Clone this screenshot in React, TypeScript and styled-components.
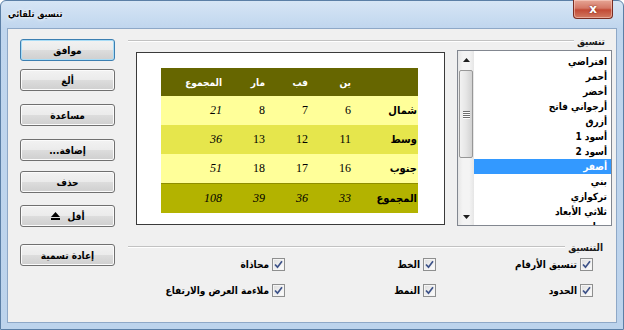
import React from 'react';
import styled, { createGlobalStyle } from 'styled-components';

const Global = createGlobalStyle`
  html, body { margin: 0; padding: 0; background: #ffffff; }
  body { width: 624px; height: 330px; overflow: hidden; font-family: "DejaVu Sans Condensed", "DejaVu Sans", sans-serif; }
  * { box-sizing: border-box; }
`;

const Frame = styled.div`
  width: 624px;
  height: 330px;
  display: flex;
  flex-direction: column;
  border: 1px solid #5b7fa6;
  border-radius: 6px 6px 0 0;
  background: linear-gradient(#d6e5f5 0px, #c0d6ee 27px, #bcd3ec 100%);
  padding: 0 6px 6px;
`;

const TitleBar = styled.div`
  height: 27px;
  display: flex;
  justify-content: space-between;
  align-items: flex-start;
`;

const Title = styled.div`
  margin-top: 8px;
  margin-left: 1px;
  font-size: 9px;
  font-weight: bold;
  color: #000;
  text-shadow: 0 0 4px #ffffff, 0 0 2px #ffffff;
`;

const CloseButton = styled.div`
  width: 40px;
  height: 19px;
  margin-right: 4px;
  margin-top: -1px;
  border: 1px solid #7a2d22;
  border-top: none;
  border-radius: 0 0 4px 4px;
  background: linear-gradient(#e6a595 0%, #d47866 45%, #c24a35 55%, #d27a62 100%);
  box-shadow: inset 0 0 0 1px rgba(255, 220, 210, 0.5);
  display: flex;
  align-items: center;
  justify-content: center;
  color: #fff;
  font-family: "DejaVu Sans", sans-serif;
  font-weight: bold;
  font-size: 12px;
  text-shadow: 0 0 2px #6a1a10;
`;

const Client = styled.div`
  flex: 1;
  border: 1px solid #8ea8c7;
  background: #f0f0f0;
  display: flex;
  direction: rtl;
  justify-content: space-between;
`;

const MainColumn = styled.div`
  width: 484px;
  margin-right: 4px;
  padding-top: 5px;
  display: flex;
  flex-direction: column;
`;

const GroupHeader = styled.div<{ $top: number }>`
  height: 14px;
  margin-top: ${(p) => p.$top}px;
  display: flex;
  align-items: center;
  gap: 3px;
`;

const GroupLabel = styled.span<{ $inset: number }>`
  margin-right: ${(p) => p.$inset}px;
  font-size: 10px;
  font-weight: bold;
  color: #1a1a1a;
  white-space: nowrap;
`;

const GroupLine = styled.div`
  flex: 1;
  height: 2px;
  border-top: 1px solid #c2c2c2;
  border-bottom: 1px solid #ffffff;
`;

const FormatRow = styled.div`
  display: flex;
  gap: 12px;
  margin-top: 2px;
`;

const ListBox = styled.div`
  width: 155px;
  height: 176px;
  border: 1px solid #828790;
  background: #ffffff;
  display: flex;
`;

const ListItems = styled.div`
  flex: 1;
  overflow: hidden;
  padding-top: 3px;
`;

const ListItem = styled.div<{ $selected?: boolean }>`
  height: 15px;
  line-height: 15px;
  padding-right: 4px;
  font-size: 10px;
  font-weight: bold;
  white-space: nowrap;
  color: ${(p) => (p.$selected ? '#ffffff' : '#000000')};
  background: ${(p) => (p.$selected ? '#3399ff' : 'transparent')};
`;

const ScrollBar = styled.div`
  width: 16px;
  display: flex;
  flex-direction: column;
  background: linear-gradient(90deg, #e6e6e6, #f4f4f4 30%, #f4f4f4 70%, #e6e6e6);
  direction: ltr;
`;

const ScrollArrow = styled.div`
  height: 17px;
  display: flex;
  align-items: center;
  justify-content: center;
`;

const ScrollTrack = styled.div`
  flex: 1;
  padding-top: 2px;
`;

const Thumb = styled.div`
  margin: 0 1px;
  height: 88px;
  border: 1px solid #979797;
  border-radius: 2px;
  background: linear-gradient(90deg, #f2f2f2, #e6e6e6 50%, #d2d2d2);
  display: flex;
  flex-direction: column;
  align-items: center;
  justify-content: center;
  gap: 1px;
`;

const Grip = styled.div`
  width: 7px;
  height: 1px;
  background: #6f6f6f;
  box-shadow: 0 1px 0 #ffffff;
`;

const Preview = styled.div`
  width: 309px;
  height: 173px;
  margin-top: 2px;
  border: 1px solid #3a3a3a;
  background: #ffffff;
  padding: 15px 26px 0 0;
`;

const Table = styled.table`
  border-collapse: collapse;
  table-layout: fixed;
  width: 257px;
  direction: rtl;
`;

const Row = styled.tr<{ $bg: string; $h: number; $line?: boolean }>`
  background: ${(p) => p.$bg};
  height: ${(p) => p.$h}px;
  border-top: ${(p) => (p.$line ? '1px solid #8f8e00' : 'none')};
`;

const HeadCell = styled.td<{ $w: number }>`
  width: ${(p) => p.$w}px;
  padding: 0 12px 0 0;
  text-align: right;
  color: #ffffff;
  font-size: 10px;
  font-weight: bold;
`;

const LabelCell = styled.td`
  padding: 0 1px 0 0;
  text-align: right;
  color: #000;
  font-size: 11px;
  font-weight: bold;
  white-space: nowrap;
`;

const NumCell = styled.td<{ $italic?: boolean }>`
  padding: 0 12px 0 0;
  text-align: right;
  color: #000;
  font-family: "Liberation Serif", serif;
  font-size: 12px;
  font-style: ${(p) => (p.$italic ? 'italic' : 'normal')};
`;

const CheckGrid = styled.div`
  margin-top: 4px;
  padding-right: 19px;
  display: grid;
  grid-template-columns: 157px 151px auto;
  row-gap: 13px;
`;

const CheckItem = styled.label`
  display: flex;
  align-items: center;
  gap: 3px;
  height: 13px;
  font-size: 10px;
  font-weight: bold;
  color: #000;
  white-space: nowrap;
`;

const CheckBox = styled.span`
  width: 13px;
  height: 13px;
  flex: none;
  border: 1px solid #8e8f8f;
  background: linear-gradient(135deg, #dcdcdc, #ffffff);
  box-shadow: inset 0 0 0 1px #f4f4f4;
  display: flex;
  align-items: center;
  justify-content: center;
`;

const ButtonColumn = styled.div`
  width: 95px;
  margin-left: 12px;
  display: flex;
  flex-direction: column;
`;

const Button = styled.div<{ $gap: number; $default?: boolean }>`
  height: 22px;
  margin-top: ${(p) => p.$gap}px;
  border: 1px solid ${(p) => (p.$default ? '#3c7fb1' : '#707070')};
  border-radius: 3px;
  background: linear-gradient(#f2f2f2 0%, #ebebeb 49%, #dddddd 50%, #cfcfcf 100%);
  box-shadow: inset 0 0 0 1px ${(p) => (p.$default ? '#a8dcf6' : '#fbfbfb')};
  display: flex;
  align-items: center;
  justify-content: center;
  gap: 8px;
  font-size: 10px;
  font-weight: bold;
  color: #000;
`;

const CheckMark = () => (
  <svg width="9" height="9" viewBox="0 0 9 9">
    <path d="M1 4.5 L3.5 7.2 L8 1.2" fill="none" stroke="#3d5288" strokeWidth="1.7" />
  </svg>
);

const UpArrow = () => (
  <svg width="7" height="4" viewBox="0 0 7 4">
    <polygon points="0,4 3.5,0 7,4" fill="#1e1e1e" />
  </svg>
);

const DownArrow = () => (
  <svg width="7" height="4" viewBox="0 0 7 4">
    <polygon points="0,0 7,0 3.5,4" fill="#1e1e1e" />
  </svg>
);

const LessIcon = () => (
  <svg width="9" height="8" viewBox="0 0 9 8">
    <polygon points="0,5 4.5,0 9,5" fill="#000" />
    <rect x="0" y="6" width="9" height="2" fill="#000" />
  </svg>
);

const styles = ['افتراضي', 'أحمر', 'أخضر', 'أرجواني فاتح', 'أزرق', 'أسود 1', 'أسود 2', 'أصفر', 'بني', 'تركوازي', 'ثلاثي الأبعاد', 'رمادي'];

const rows = [
  { label: 'شمال', vals: ['6', '7', '8'], total: '21', bg: '#ffff99' },
  { label: 'وسط', vals: ['11', '12', '13'], total: '36', bg: '#e6e64c' },
  { label: 'جنوب', vals: ['16', '17', '18'], total: '51', bg: '#ffff99' },
];

const checks = ['تنسيق الأرقام', 'الخط', 'محاذاة', 'الحدود', 'النمط', 'ملاءمة العرض والارتفاع'];

export default function App() {
  return (
    <>
      <Global />
      <Frame>
        <TitleBar>
          <Title dir="rtl">تنسيق تلقائي</Title>
          <CloseButton>x</CloseButton>
        </TitleBar>
        <Client>
          <MainColumn>
            <GroupHeader $top={0}>
              <GroupLabel $inset={7}>تنسيق</GroupLabel>
              <GroupLine />
            </GroupHeader>
            <FormatRow>
              <ListBox>
                <ListItems>
                  {styles.map((s) => (
                    <ListItem key={s} $selected={s === 'أصفر'}>
                      {s}
                    </ListItem>
                  ))}
                </ListItems>
                <ScrollBar>
                  <ScrollArrow>
                    <UpArrow />
                  </ScrollArrow>
                  <ScrollTrack>
                    <Thumb>
                      <Grip />
                      <Grip />
                      <Grip />
                      <Grip />
                    </Thumb>
                  </ScrollTrack>
                  <ScrollArrow>
                    <DownArrow />
                  </ScrollArrow>
                </ScrollBar>
              </ListBox>
              <Preview>
                <Table>
                  <tbody>
                    <Row $bg="#666600" $h={28}>
                      <HeadCell $w={55}></HeadCell>
                      <HeadCell $w={43}>ين</HeadCell>
                      <HeadCell $w={43}>فب</HeadCell>
                      <HeadCell $w={43}>مار</HeadCell>
                      <HeadCell $w={73}>المجموع</HeadCell>
                    </Row>
                    {rows.map((r) => (
                      <Row key={r.label} $bg={r.bg} $h={29}>
                        <LabelCell>{r.label}</LabelCell>
                        {r.vals.map((v) => (
                          <NumCell key={v}>{v}</NumCell>
                        ))}
                        <NumCell $italic>{r.total}</NumCell>
                      </Row>
                    ))}
                    <Row $bg="#b3b300" $h={30} $line>
                      <LabelCell>المجموع</LabelCell>
                      <NumCell $italic>33</NumCell>
                      <NumCell $italic>36</NumCell>
                      <NumCell $italic>39</NumCell>
                      <NumCell $italic>108</NumCell>
                    </Row>
                  </tbody>
                </Table>
              </Preview>
            </FormatRow>
            <GroupHeader $top={14}>
              <GroupLabel $inset={9}>التنسيق</GroupLabel>
              <GroupLine />
            </GroupHeader>
            <CheckGrid>
              {checks.map((c) => (
                <CheckItem key={c}>
                  <CheckBox>
                    <CheckMark />
                  </CheckBox>
                  {c}
                </CheckItem>
              ))}
            </CheckGrid>
          </MainColumn>
          <ButtonColumn>
            <Button $gap={10} $default>موافق</Button>
            <Button $gap={8}>ألغ</Button>
            <Button $gap={13}>مساعدة</Button>
            <Button $gap={13}>إضافة...</Button>
            <Button $gap={10}>حذف</Button>
            <Button $gap={12}>
              أقل
              <LessIcon />
            </Button>
            <Button $gap={17}>إعادة تسمية</Button>
          </ButtonColumn>
        </Client>
      </Frame>
    </>
  );
}
